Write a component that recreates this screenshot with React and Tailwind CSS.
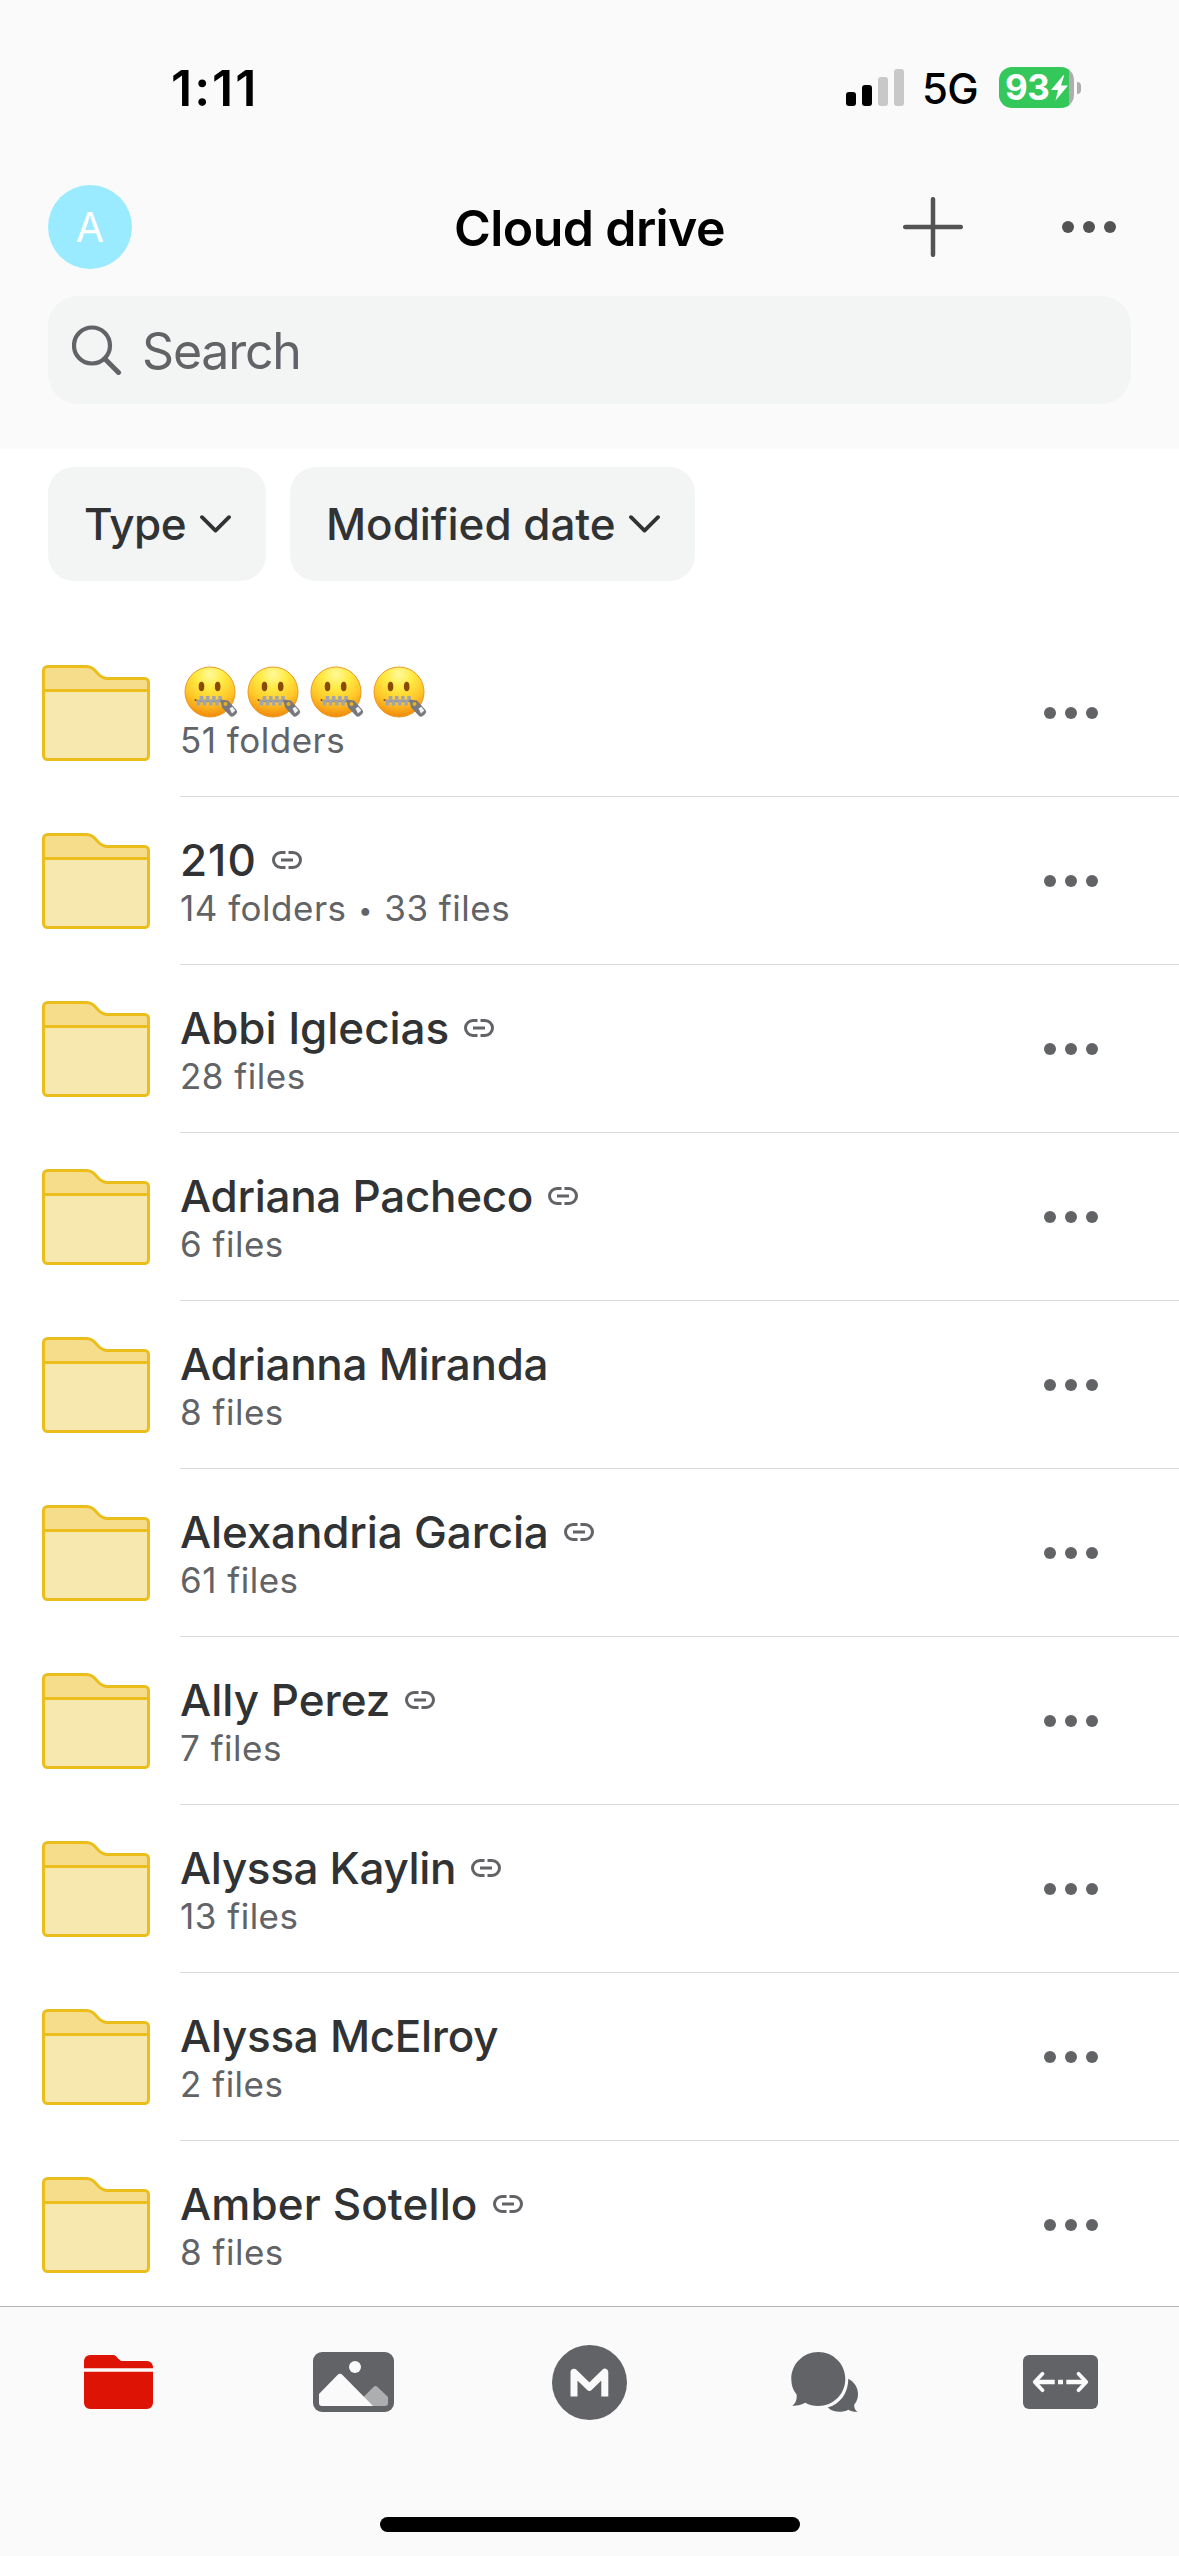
import React from 'react';

const folders = [
  { name: '🤐🤐🤐🤐', emoji: 4, info: ['51 folders'], shared: false },
  { name: '210', info: ['14 folders', '33 files'], shared: true, tracking: 'tracking-[1px]' },
  { name: 'Abbi Iglecias', info: ['28 files'], shared: true, tracking: 'tracking-[-0.05px]' },
  { name: 'Adriana Pacheco', info: ['6 files'], shared: true },
  { name: 'Adrianna Miranda', info: ['8 files'], shared: false },
  { name: 'Alexandria Garcia', info: ['61 files'], shared: true, tracking: 'tracking-[-0.15px]' },
  { name: 'Ally Perez', info: ['7 files'], shared: true, tracking: 'tracking-normal' },
  { name: 'Alyssa Kaylin', info: ['13 files'], shared: true, tracking: 'tracking-[-0.35px]' },
  { name: 'Alyssa McElroy', info: ['2 files'], shared: false },
  { name: 'Amber Sotello', info: ['8 files'], shared: true, tracking: 'tracking-[0.1px]' },
];

const Dots = ({ className = '' }) => (
  <svg viewBox="0 0 54 12" className={`h-3 w-[54px] shrink-0 ${className}`} fill="currentColor">
    <circle cx="6" cy="6" r="6" />
    <circle cx="27" cy="6" r="6" />
    <circle cx="48" cy="6" r="6" />
  </svg>
);

const Chevron = () => (
  <svg viewBox="0 0 31 18" className="h-[18px] w-[31px] shrink-0" fill="none" stroke="currentColor" strokeWidth="3.8" strokeLinecap="round" strokeLinejoin="round">
    <path d="M2 2.200 15.500 15.600 29 2.200" />
  </svg>
);

const LinkIcon = () => (
  <svg viewBox="0 0 30 18" className="h-[18px] w-[30px] shrink-0 text-[#616366]" fill="none" stroke="currentColor" strokeWidth="3">
    <path d="M13.500 1.500H9a7.500 7.500 0 0 0 0 15h4.500M16.500 1.500H21a7.500 7.500 0 0 1 0 15h-4.500M9 9h12" />
  </svg>
);

const FolderIcon = () => (
  <svg viewBox="0 0 108 96" className="h-24 w-[108px] shrink-0">
    <path d="M1.500 25.500V5.500a4 4 0 0 1 4-4H44c4 0 6.500 1.200 9 4l3.500 3.700c2.700 2.900 5 4.300 9 4.300h37a4 4 0 0 1 4 4v8z" fill="#f5dd8b" />
    <path d="M1.500 25.500h105v65a4 4 0 0 1-4 4h-97a4 4 0 0 1-4-4z" fill="#f7e8b0" />
    <path d="M1.500 25.500h105M5.500 1.500H44c4 0 6.500 1.200 9 4l3.500 3.700c2.700 2.900 5 4.300 9 4.300h37a4 4 0 0 1 4 4v73a4 4 0 0 1-4 4h-97a4 4 0 0 1-4-4v-85a4 4 0 0 1 4-4z" fill="none" stroke="#ecbe1c" strokeWidth="3" />
  </svg>
);

const ZipperFace = () => (
  <svg viewBox="0 0 63 54" className="h-[54px] w-[63px] shrink-0">
    <defs>
      <radialGradient id="face" cx=".5" cy=".15" r=".88">
        <stop offset="0" stopColor="#fffa9a" />
        <stop offset=".32" stopColor="#ffea42" />
        <stop offset=".65" stopColor="#ffc627" />
        <stop offset="1" stopColor="#f0820a" />
      </radialGradient>
    </defs>
    <circle cx="30" cy="27" r="25" fill="url(#face)" stroke="#ee9a22" strokeWidth="1" />
    <ellipse cx="21.500" cy="21.500" rx="2.800" ry="4.700" fill="#8a4a05" />
    <ellipse cx="37.700" cy="21.500" rx="2.800" ry="4.700" fill="#8a4a05" />
    <circle cx="15.500" cy="35" r="1" fill="#8a3a05" />
    <path d="M16.500 36h25" stroke="#8f8f93" strokeWidth="2.500" />
    <path d="M21.500 31v5M27.700 31v5M33.900 31v5M40 31v5M18.500 35.500v5M24.600 35.500v5M30.800 35.500v5M37 35.500v5" stroke="#a4a5aa" strokeWidth="3.600" />
    <path d="m40 34.500 8 1 8.500 9.500a3 3 0 0 1-.3 4l-2.400 2a3 3 0 0 1-4-.3l-7.500-8z" fill="#77797d" />
    <circle cx="45.500" cy="39" r="2" fill="#e9ae22" />
    <path d="m49.500 43.500 2.800-1.700 3 3.600-3.300 3.200z" fill="#f2f2f2" />
  </svg>
);

const StatusBar = () => (
  <div className="flex h-[170px] items-start justify-between pl-[171px] pr-[98px] pt-[67px] text-black">
    <div className="text-[50px] font-semibold leading-[42px] tracking-[2px]">1:11</div>
    <div className="flex h-[41px] items-center">
      <svg viewBox="0 0 58 37" className="h-[37px] w-[58px]">
        <rect x="0" y="23" width="10" height="14" rx="3" />
        <rect x="16" y="16" width="10" height="21" rx="3" />
        <rect x="32" y="8" width="10" height="29" rx="3" fill="#c8c8c8" />
        <rect x="48" y="0" width="10" height="37" rx="3" fill="#c8c8c8" />
      </svg>
      <span className="ml-[18px] mt-[2px] w-[58px] text-[42px] font-medium leading-[41px] tracking-[-0.6px]">5G</span>
      <div className="ml-[19px] flex h-[41px] w-[75px] items-center overflow-hidden rounded-[13px] bg-linear-to-r from-[#34c759] from-93% to-[#b0adb0] to-93% pl-[6px] text-white">
        <span className="w-[46px] text-[35px] font-bold leading-[41px] tracking-[-0.5px]">93</span>
        <svg viewBox="0 0 17 26" className="h-[26px] w-[17px] shrink-0" fill="currentColor">
          <path d="M12.500 0 0 15h7L4.500 25.500 17 10.500h-7L13.200.5z" />
        </svg>
      </div>
      <div className="ml-[3px] h-3 w-1 rounded-r-full bg-[#b0adb0]" />
    </div>
  </div>
);

const Header = () => (
  <header className="h-[449px] shrink-0 bg-[#fafafa]">
    <StatusBar />
    <div className="grid h-[114px] grid-cols-3 items-center px-12">
      <div className="flex size-[84px] items-center justify-center rounded-full bg-[#9aebff] text-[41px] leading-none text-white">A</div>
      <h1 className="mt-[2px] text-center text-[50px] font-semibold leading-none tracking-[-0.6px] text-black">Cloud drive</h1>
      <div className="flex items-center justify-end gap-[99px] pr-[15px] text-[#535353]">
        <svg viewBox="0 0 60 60" className="size-[60px]" stroke="currentColor" strokeWidth="4.500" strokeLinecap="round">
          <path d="M30 2.200v55.600M2.200 30h55.600" />
        </svg>
        <Dots />
      </div>
    </div>
    <div className="mx-12 mt-3 flex h-[108px] items-center rounded-[30px] bg-[#f3f4f4] pl-6 text-[#616366]">
      <svg viewBox="0 0 50 50" className="size-[50px]" fill="none" stroke="currentColor" strokeWidth="4.200" strokeLinecap="round">
        <circle cx="20" cy="20.500" r="18" />
        <path d="m33 34 13.500 13.500" strokeWidth="5" />
      </svg>
      <span className="ml-[20px] mt-[2px] text-[50px] leading-none tracking-[-1.200px]">Search</span>
    </div>
  </header>
);

const FilterChip = ({ label, className }) => (
  <button className={`flex h-[114px] items-center justify-between rounded-[26px] bg-[#f3f4f4] pl-[36px] pr-[35px] text-[44px] font-medium leading-none text-[#303233] ${className}`}>
    <span className="whitespace-nowrap">{label}</span>
    <Chevron />
  </button>
);

const FolderRow = ({ folder }) => (
  <li className="flex h-[168px] pl-[42px]">
    <div className="flex w-[138px] shrink-0 items-center">
      <FolderIcon />
    </div>
    <div className="flex flex-1 items-center justify-between border-b border-[#dadada] pr-[81px]">
      <div className="pt-[2px]">
        {/* Name */}
        <div className="flex h-[52px] items-center gap-[15px]">
          {folder.emoji ? (
            <div className="flex pt-px" role="img" aria-label={folder.name}>
              {Array.from({ length: folder.emoji }, (_, i) => <ZipperFace key={i} />)}
            </div>
          ) : (
            <span className={`whitespace-nowrap text-[44px] font-medium leading-[52px] text-[#303233] ${folder.tracking || 'tracking-[-0.3px]'}`}>
              {folder.name}
            </span>
          )}
          {folder.shared && <LinkIcon />}
        </div>

        {/* Contents */}
        <div className="h-11 whitespace-nowrap text-[35px] leading-[44px] tracking-[0.5px] text-[#616366]">
          {folder.info[0]}
          {folder.info[1] && (
            <>
              {' '}
              <span className="relative -top-[2px] inline-block w-[17px] text-center text-[25px] leading-none">•</span>
              {' '}
              {folder.info[1]}
            </>
          )}
        </div>
      </div>
      <Dots className="text-[#616366]" />
    </div>
  </li>
);

const TabBar = () => (
  <nav className="flex h-[250px] flex-col items-center border-t border-[#b2b2b2] bg-[#fafafa] text-[#616366]">
    <div className="grid h-[150px] w-full grid-cols-5 place-items-center">
      <svg viewBox="0 0 69 54" className="ml-[2px] h-[54px] w-[69px]" fill="#dd1405">
        <path d="M0 13.200V6a6 6 0 0 1 6-6h22.500c2 0 3 .6 4.200 1.900l2.200 2.300C36.200 5.500 37 6 39 6h24a6 6 0 0 1 6 6v1.200zM0 16.800h69V48a6 6 0 0 1-6 6H6a6 6 0 0 1-6-6z" />
      </svg>
      <svg viewBox="0 0 81 60" className="h-[60px] w-[81px]">
        <rect width="81" height="60" rx="9" fill="currentColor" />
        <circle cx="42" cy="15" r="6" fill="#fafafa" />
        <path d="M50.500 45 60.500 35a3 3 0 0 1 4 0L75 45v6a3 3 0 0 1-3 3H56z" fill="#adaeaf" />
        <path d="M6 42 24.500 23a3.500 3.500 0 0 1 5 0L60 54H9a3 3 0 0 1-3-3z" fill="#fafafa" />
      </svg>
      <svg viewBox="0 0 75 75" className="size-[75px]">
        <circle cx="37.500" cy="37.500" r="37.500" fill="currentColor" />
        <path d="M22 51.500V27.300l15.400 15 15.400-15v24.200" fill="none" stroke="#fafafa" strokeWidth="7" strokeLinejoin="round" />
      </svg>
      <svg viewBox="0 0 67 60" className="mr-[1px] h-[60px] w-[67px]" fill="currentColor">
        <path d="M27.300 0c15 0 27 12 27 27s-12 27-27 27c-4.800 0-9-1.100-13-3.200C10 53 6 54 1.200 53.700c3.800-2.700 4.800-6.400 4.400-11.200C1.800 38 .3 33 .3 27c0-15 12-27 27-27z" />
        <path d="M57.300 26.800C63.200 30 67 35.500 67 42c0 4-1.200 7.500-3.700 10.500-.4 3 .7 5.500 3.200 7.300-3.500.2-6.300-.3-9-2-7.500 3.400-15.500 2.600-20.700-2.300 12-3.300 20.500-14 20.500-28.700z" />
      </svg>
      <svg viewBox="0 0 75 54" className="mr-[2px] h-[54px] w-[75px]">
        <rect width="75" height="54" rx="6" fill="currentColor" />
        <path d="M13 27h18.700M43.300 27H62M35 27h5" stroke="#fafafa" strokeWidth="4.500" />
        <path d="m19.500 18.800-7.800 8.200 7.800 8.200M55.500 18.800l7.800 8.200-7.800 8.200" fill="none" stroke="#fafafa" strokeWidth="3.800" strokeLinecap="round" strokeLinejoin="round" />
      </svg>
    </div>
    {/* Home indicator */}
    <div className="mt-[60px] h-[15px] w-[420px] rounded-full bg-black" />
  </nav>
);

const App = () => {
  return (
    <div className="flex h-[2556px] w-[1179px] flex-col overflow-hidden bg-white font-['Inter','Liberation_Sans',sans-serif]">
      <Header />
      <div className="flex h-[180px] shrink-0 gap-6 px-12 pt-[18px]">
        <FilterChip label="Type" className="w-[218px] tracking-[-0.6px]" />
        <FilterChip label="Modified date" className="w-[405px] tracking-[-0.05px]" />
      </div>
      <ul className="h-[1677px] shrink-0 overflow-hidden">
        {folders.map((folder) => (
          <FolderRow key={folder.name} folder={folder} />
        ))}
      </ul>
      <TabBar />
    </div>
  );
};

export default App;
